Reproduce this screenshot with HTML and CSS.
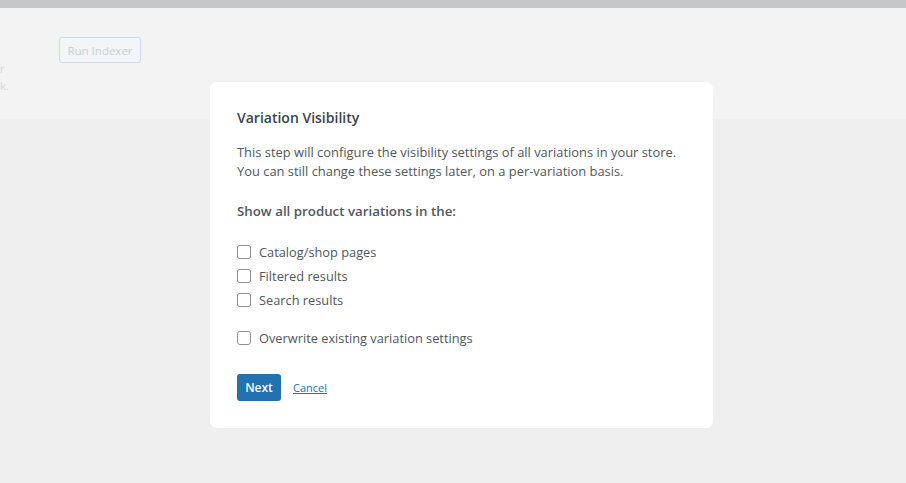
FILE: index.html
```html
<!DOCTYPE html>
<html>
<head>
<meta charset="utf-8">
<link rel="stylesheet" href="styles.css">
</head>
<body>
<div class="topbar"></div>
<div class="panel">
  <div class="panel-left">
    <span class="frag f1">r</span>
    <span class="frag f2">k.</span>
  </div>
  <button class="run-btn">Run Indexer</button>
</div>
<div class="rest"></div>

<div class="modal">
  <h2 class="modal-title">Variation Visibility</h2>
  <p class="modal-text">This step will configure the visibility settings of all variations in your store.<br>You can still change these settings later, on a per-variation basis.</p>
  <p class="modal-label">Show all product variations in the:</p>
  <div class="checks">
    <label class="check"><span class="box"></span>Catalog/shop pages</label>
    <label class="check"><span class="box"></span>Filtered results</label>
    <label class="check"><span class="box"></span>Search results</label>
  </div>
  <label class="check overwrite"><span class="box"></span>Overwrite existing variation settings</label>
  <div class="actions">
    <button class="next-btn">Next</button>
    <a class="cancel" href="#">Cancel</a>
  </div>
</div>
</body>
</html>
```

FILE: styles.css
```css
html, body {
  margin: 0;
  padding: 0;
}
body {
  background: #efefef;
  font-family: "Open Sans", "Noto Sans", sans-serif;
  width: 906px;
  height: 483px;
  overflow: hidden;
  position: relative;
}
.topbar {
  height: 8px;
  background: #c6c7c8;
}
.panel {
  height: 111px;
  background: #f3f3f3;
  display: flex;
  align-items: flex-start;
}
.panel-left {
  width: 59px;
  position: relative;
  height: 100%;
}
.frag {
  position: absolute;
  left: 0;
  font-size: 11px;
  color: #d6d6d6;
}
.f1 { top: 53px; }
.f2 { top: 70px; }
.run-btn {
  margin-top: 29px;
  height: 26px;
  width: 82px;
  border: 1px solid #c9dced;
  border-radius: 3px;
  background: #f4f5f6;
  color: #c5ced8;
  font-family: "Open Sans", sans-serif;
  font-size: 11.5px;
  padding: 0;
}
.modal {
  position: absolute;
  left: 210px;
  top: 82px;
  width: 503px;
  height: 346px;
  box-sizing: border-box;
  background: #fff;
  border-radius: 7px;
  padding: 24px 27px;
  color: #50575e;
}
.modal-title {
  margin: 0;
  font-size: 14px;
  font-weight: 600;
  color: #3c434a;
  line-height: 24px;
}
.modal-text {
  margin: 13px 0 0;
  font-size: 12.9px;
  line-height: 19px;
}
.modal-label {
  margin: 21px 0 0;
  font-size: 13.3px;
  font-weight: 600;
  line-height: 19px;
  color: #50575e;
}
.checks {
  margin-top: 19px;
  display: flex;
  flex-direction: column;
}
.check {
  display: flex;
  align-items: center;
  height: 24px;
  font-size: 12.8px;
}
.box {
  width: 12px;
  height: 12px;
  border: 1px solid #8c8f94;
  border-radius: 3px;
  margin-right: 8px;
  flex: none;
}
.overwrite {
  margin-top: 14px;
}
.actions {
  margin-top: 24px;
  display: flex;
  align-items: center;
  gap: 12px;
}
.next-btn {
  height: 27px;
  width: 44px;
  border: none;
  border-radius: 3px;
  background: #2271b1;
  color: #fff;
  font-family: "Open Sans", sans-serif;
  font-size: 12px;
  font-weight: 600;
  padding: 0;
}
.cancel {
  color: #2271b1;
  font-size: 11px;
  text-decoration: underline;
}
```
